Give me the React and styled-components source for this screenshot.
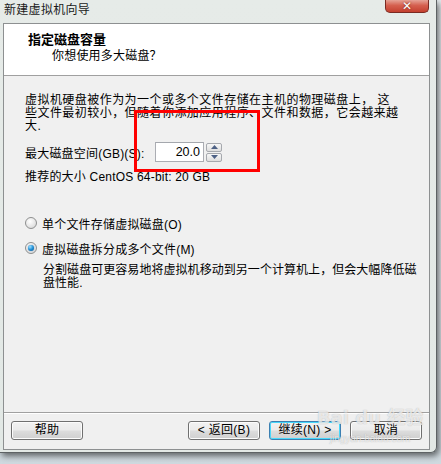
import React from "react";
import styled, { createGlobalStyle } from "styled-components";

const Global = createGlobalStyle`
  html, body { margin: 0; padding: 0; }
  body {
    width: 441px; height: 464px; overflow: hidden;
    background: linear-gradient(180deg, #e6ecef 0%, #dfe6ea 60%, #cfd9df 100%);
    font-family: "Liberation Sans", "Noto Sans CJK SC", sans-serif;
    font-size: 12px; color: #000;
  }
`;

const Desk = styled.div`
  position: relative;
  width: 441px; height: 464px;
`;

const Window = styled.div`
  position: relative;
  width: 437px; height: 453px;
  box-sizing: border-box;
  display: flex; flex-direction: column;
  background: linear-gradient(180deg, #e6ebe8 0%, #e2e8e5 100%);
  border-right: 1px solid #5d6264;
  border-bottom: 1px solid #5d6264;
  border-radius: 0 0 6px 0;
  box-shadow: 2px 3px 6px rgba(0,0,0,0.55);
`;

const TitleBar = styled.div`
  height: 23px; flex: none;
  display: flex; align-items: flex-start; justify-content: space-between;
  padding-left: 4px;
`;

const TitleText = styled.div`
  font-family: "Noto Sans CJK SC", sans-serif;
  font-size: 12px; line-height: 18px; color: #1a1a1a;
  letter-spacing: 0.3px;
`;

const CloseBtn = styled.div`
  width: 44px; height: 13px; margin-right: 7px;
  box-sizing: border-box;
  border: 1px solid #7a2a22; border-top: none;
  border-radius: 0 0 5px 5px;
  background: linear-gradient(180deg, #e6a396 0%, #d5604f 45%, #c4402f 100%);
  display: flex; align-items: flex-end; justify-content: center;
  color: #fff; font-size: 12px; font-weight: bold; line-height: 11px;
  font-family: "DejaVu Sans", sans-serif;
  text-shadow: 0 0 2px #6a1a10;
`;

const Client = styled.div`
  flex: 1;
  margin: 0 6px 2px 3px;
  border: 1px solid #8d9091;
  display: flex; flex-direction: column;
  background: #f0f0f0;
`;

const Header = styled.div`
  height: 52px; flex: none;
  background: #fff;
  border-bottom: 1px solid #a0a0a0;
  padding: 7px 0 0 24px;
  box-sizing: border-box;
`;

const HeadTitle = styled.div`
  font-family: "Noto Sans CJK SC", sans-serif;
  font-weight: bold; font-size: 13px; line-height: 16px;
`;

const HeadSub = styled.div`
  font-family: "Noto Sans CJK SC", sans-serif;
  font-size: 12px; line-height: 16px;
  padding-left: 24px; letter-spacing: 0.2px;
`;

const Body = styled.div`
  flex: 1;
  padding: 18px 0 0 21px;
  display: flex; flex-direction: column;
`;

const Para = styled.div`
  line-height: 13px;
  letter-spacing: ${p => p.$ls || 0}px;
  padding-left: ${p => p.$indent || 0}px;
  margin-top: ${p => p.$mt || 0}px;
  white-space: nowrap;
`;

const Line = styled.span`
  display: block;
`;

const SizeRow = styled.div`
  display: flex; align-items: center;
  margin-top: 9px; height: 20px;
`;

const Label = styled.span`
  width: 130px; letter-spacing: 0.2px;
`;

const SpinInput = styled.div`
  width: 49px; height: 20px; box-sizing: border-box;
  background: #fff;
  border: 1px solid #abadb3; border-top-color: #a4a7ad;
  display: flex; align-items: center; justify-content: flex-end;
  padding-right: 3px; font-size: 12.5px;
`;

const SpinCol = styled.div`
  display: flex; flex-direction: column; gap: 1px;
  margin-left: 2px;
`;

const SpinBtn = styled.div`
  width: 16px; height: 9px; box-sizing: border-box;
  border: 1px solid #a6a9ae; border-radius: 2px;
  background: linear-gradient(180deg, #f7f7f7, #dedede);
  display: flex; align-items: center; justify-content: center;
`;

const RadioRow = styled.div`
  display: flex; align-items: center; gap: 5px;
  height: 16px; margin-top: ${p => p.$mt}px;
  letter-spacing: 0.2px;
`;

const RadioDot = styled.span`
  width: 12px; height: 12px; border-radius: 50%;
  box-sizing: border-box;
  border: 1px solid #8e8f8f;
  background: radial-gradient(circle at 40% 35%, #ffffff 0%, #e4e4e4 60%, #cfcfcf 100%);
  display: flex; align-items: center; justify-content: center;
  &::after {
    content: "";
    width: 6px; height: 6px; border-radius: 50%;
    display: ${p => (p.$on ? "block" : "none")};
    background: radial-gradient(circle at 35% 30%, #9fe0ff 0%, #1f8fd6 50%, #0b4f8a 100%);
    box-shadow: 0 0 1px #0b4f8a;
  }
`;

const Footer = styled.div`
  height: 37px; flex: none;
  border-top: 1px solid #a0a0a0;
  box-shadow: inset 0 1px 0 #fff;
  display: flex; align-items: flex-start;
  padding: 8px 7px 0 7px; box-sizing: border-box;
`;

const Button = styled.div`
  width: 72px; height: 19px; box-sizing: border-box;
  margin-left: ${p => p.$ml || 0}px;
  border: 1px solid ${p => (p.$def ? "#3c7fb1" : "#707070")};
  border-radius: 3px;
  background: linear-gradient(180deg, #f2f2f2 0%, #ebebeb 48%, #dddddd 52%, #cfcfcf 100%);
  box-shadow: ${p => (p.$def ? "inset 0 0 0 1px #48d8fb" : "inset 0 0 0 1px #fcfcfc")};
  display: flex; align-items: center; justify-content: center;
  font-size: 12px; line-height: 17px; letter-spacing: 0.3px;
`;

const Spacer = styled.div`
  flex: 1;
`;

const RedBox = styled.div`
  position: absolute;
  left: 134px; top: 110px; width: 126px; height: 62px;
  box-sizing: border-box;
  border: 3px solid #ff0000;
  pointer-events: none;
`;

const Watermark = styled.div`
  position: absolute;
  left: 322px; top: 407px;
  width: 96px;
  display: flex; flex-direction: column; align-items: center;
  pointer-events: none;
  color: rgba(255,255,255,0.7);
  text-shadow: 0 0 1px rgba(110,110,110,0.5);
`;

const WmLogo = styled.div`
  height: 22px;
  font-family: "DejaVu Sans", "Noto Sans CJK SC", sans-serif;
  font-weight: bold; font-size: 18px; line-height: 22px;
  white-space: nowrap;
`;

const WmUrl = styled.div`
  height: 12px;
  font-family: "Liberation Sans", sans-serif;
  font-size: 10px; line-height: 12px; margin-top: 4px;
  white-space: nowrap;
`;

const Triangle = ({ up }) => (
  <svg width="7" height="4" viewBox="0 0 7 4">
    <path d={up ? "M0 4 L3.5 0 L7 4 Z" : "M0 0 L3.5 4 L7 0 Z"} fill="#4d6185" />
  </svg>
);

export default function App() {
  return (
    <Desk>
      <Global />
      <Window>
        <TitleBar>
          <TitleText>新建虚拟机向导</TitleText>
          <CloseBtn>✕</CloseBtn>
        </TitleBar>
        <Client>
          <Header>
            <HeadTitle>指定磁盘容量</HeadTitle>
            <HeadSub>你想使用多大磁盘？</HeadSub>
          </Header>
          <Body>
            <Para $ls={0.45}>
              <Line>虚拟机硬盘被作为为一个或多个文件存储在主机的物理磁盘上， 这</Line>
              <Line>些文件最初较小，但随着你添加应用程序、文件和数据，它会越来越</Line>
              <Line>大.</Line>
            </Para>
            <SizeRow>
              <Label>最大磁盘空间(GB)(S):</Label>
              <SpinInput>20.0</SpinInput>
              <SpinCol>
                <SpinBtn><Triangle up /></SpinBtn>
                <SpinBtn><Triangle /></SpinBtn>
              </SpinCol>
            </SizeRow>
            <Para $mt={9} $ls={0.2}>推荐的大小 CentOS 64-bit: 20 GB</Para>
            <RadioRow $mt={31}>
              <RadioDot />
              <span>单个文件存储虚拟磁盘(O)</span>
            </RadioRow>
            <RadioRow $mt={9}>
              <RadioDot $on />
              <span>虚拟磁盘拆分成多个文件(M)</span>
            </RadioRow>
            <Para $mt={8} $indent={18} $ls={0.05}>
              <Line>分割磁盘可更容易地将虚拟机移动到另一个计算机上，但会大幅降低磁</Line>
              <Line>盘性能.</Line>
            </Para>
          </Body>
          <Footer>
            <Button>帮助</Button>
            <Spacer />
            <Button>&lt; 返回(B)</Button>
            <Button $def $ml={9}>继续(N) &gt;</Button>
            <Button $ml={9}>取消</Button>
          </Footer>
        </Client>
        <RedBox />
        <Watermark>
          <WmLogo>Bai du 经验</WmLogo>
          <WmUrl>jingyan.baidu.com</WmUrl>
        </Watermark>
      </Window>
    </Desk>
  );
}
